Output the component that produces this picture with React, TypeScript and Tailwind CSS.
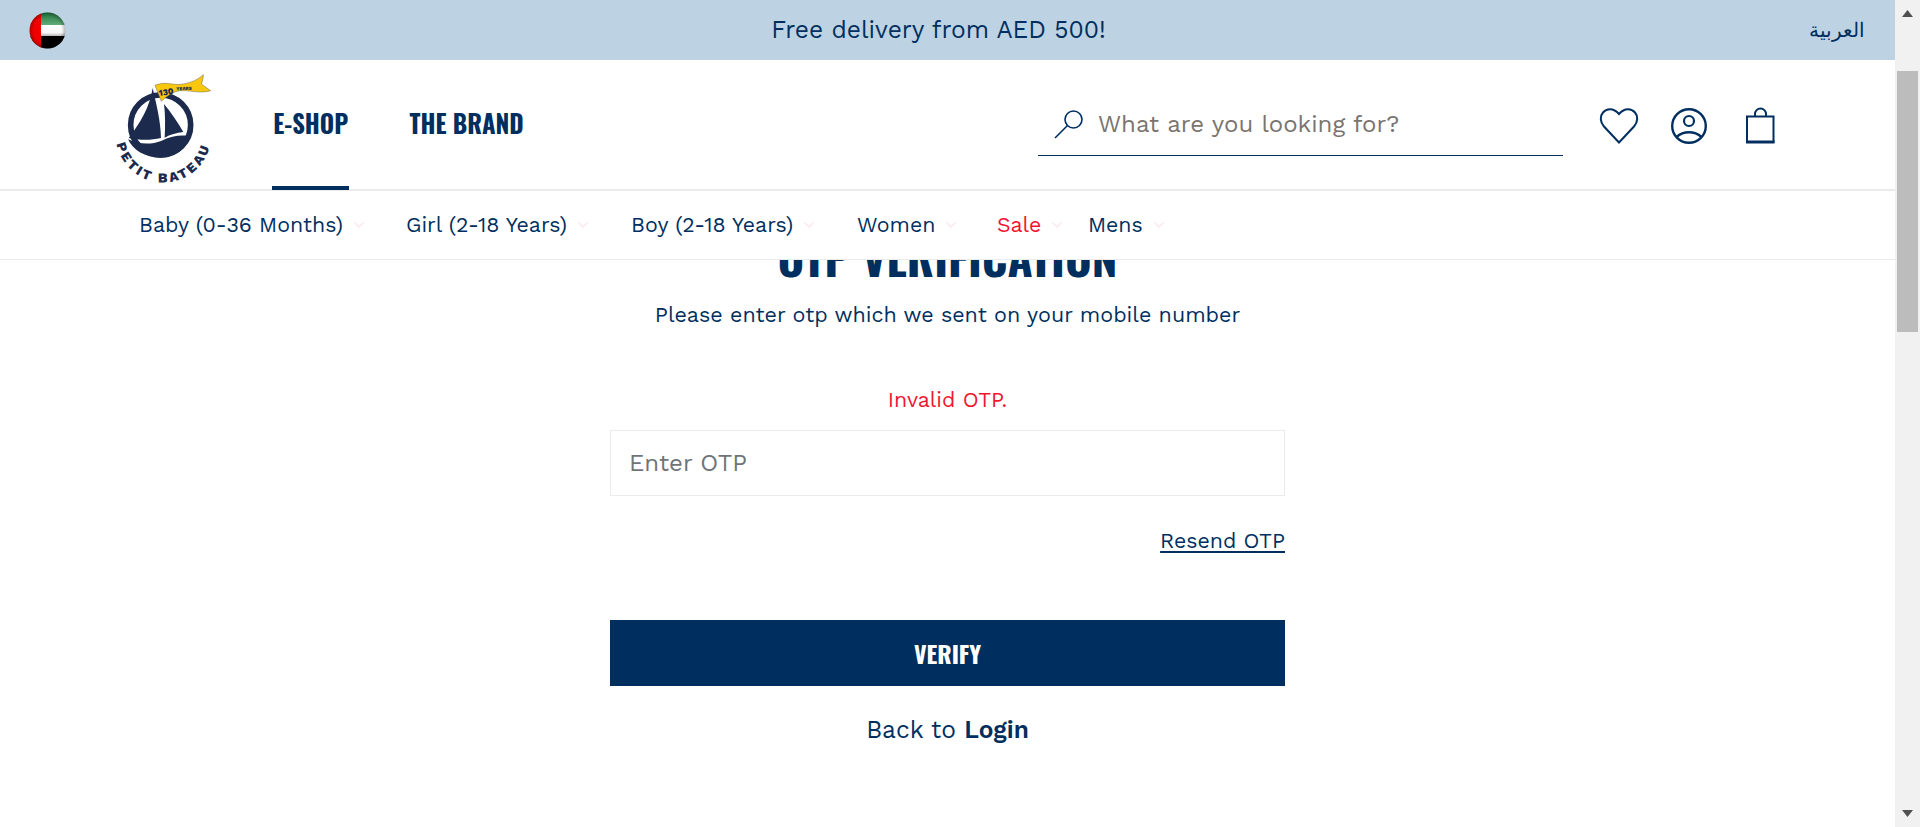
import { ChevronDown } from 'lucide-react'

const NAVY = 'text-[#002f5f]'

const categories = [
  { label: 'Baby (0-36 Months)', className: 'w-[267px]' },
  { label: 'Girl (2-18 Years)', className: 'w-[225px]' },
  { label: 'Boy (2-18 Years)', className: 'w-[226px]' },
  { label: 'Women', className: 'w-[140px]' },
  { label: 'Sale', className: 'w-[91px]', red: true },
  { label: 'Mens', className: 'w-[100px]' },
]

function Flag() {
  return (
    <svg width="37" height="37" viewBox="0 0 37 37">
      <defs>
        <clipPath id="flag-clip">
          <circle cx="18.5" cy="18.5" r="18" />
        </clipPath>
        <linearGradient id="flag-green" x1="0" y1="0" x2="0" y2="1">
          <stop offset="0" stopColor="#1d6f38" />
          <stop offset="1" stopColor="#62ad79" />
        </linearGradient>
        <linearGradient id="flag-white" x1="0" y1="0" x2="0" y2="1">
          <stop offset="0" stopColor="#ffffff" />
          <stop offset="0.7" stopColor="#f6f6f6" />
          <stop offset="1" stopColor="#b5b5b5" />
        </linearGradient>
        <radialGradient id="flag-edge" cx="0.5" cy="0.5" r="0.5">
          <stop offset="0.75" stopColor="#000" stopOpacity="0" />
          <stop offset="1" stopColor="#000" stopOpacity="0.3" />
        </radialGradient>
      </defs>
      <g clipPath="url(#flag-clip)">
        <rect width="37" height="13" fill="url(#flag-green)" />
        <rect y="13" width="37" height="11" fill="url(#flag-white)" />
        <rect y="24" width="37" height="13" fill="#000" />
        <rect width="12" height="37" fill="#f00000" />
        <rect width="37" height="37" fill="url(#flag-edge)" />
      </g>
    </svg>
  )
}

function Logo() {
  return (
    <svg width="140" height="130" viewBox="0 0 420 390" className="shrink-0">
      <circle cx="182" cy="195" r="90" fill="none" stroke="#1c2b4d" strokeWidth="17" />
      <path d="M158 84 C168 130 182 180 183 234 C150 242 115 240 86 234 C120 190 150 140 158 84Z" fill="#1c2b4d" />
      <path d="M192 132 C215 160 235 190 250 216 C230 218 210 224 194 233 C196 200 196 165 192 132Z" fill="#1c2b4d" />
      <path d="M84 238 C115 252 150 256 185 242 C215 228 240 224 268 228 C262 265 225 293 182 293 C135 293 98 270 84 238Z" fill="#1c2b4d" />
      <path d="M165 76 C200 62 215 78 250 72 C275 68 295 58 310 44 C310 58 306 66 304 72 L332 92 C300 102 270 90 240 92 C220 94 200 108 184 124Z" fill="#f9c80e" stroke="#6b6b55" strokeWidth="1.5" />
      <text x="178" y="108" fontFamily="'Work Sans', sans-serif" fontWeight="800" fontSize="26" fill="#1c2b4d" transform="rotate(-9 178 108)">130</text>
      <text x="229" y="91" fontFamily="'Work Sans', sans-serif" fontWeight="800" fontSize="14" fill="#1c2b4d" transform="rotate(-2 229 91)">YEARS</text>
      <path id="logo-curve" d="M50 252 A143 143 0 0 0 332 205" fill="none" />
      <text fontFamily="'Work Sans', sans-serif" fontWeight="800" fontSize="41" letterSpacing="8" fill="#1c2b4d">
        <textPath href="#logo-curve">PETIT BATEAU</textPath>
      </text>
    </svg>
  )
}

function SearchIcon() {
  return (
    <svg width="32" height="30" viewBox="0 0 32 30" fill="none" stroke="#002f5f" strokeWidth="1.6" className="shrink-0">
      <circle cx="20.5" cy="10.5" r="8.5" />
      <path d="M14.5 16.5 L2 29" />
    </svg>
  )
}

function HeartIcon() {
  return (
    <svg width="41" height="37" viewBox="0 0 41 37" fill="none" stroke="#002f5f" strokeWidth="2">
      <path d="M21 35.5 L6 19.5 C2 15 1.8 9 5 5.5 C8.5 1.5 15 0.5 21 7 C27 0.5 33.5 1.5 37 5.5 C40.2 9 40 15 36 19.5Z" />
    </svg>
  )
}

function UserIcon() {
  return (
    <svg width="36" height="37" viewBox="0 0 36 37" fill="none" stroke="#002f5f" strokeWidth="2.4">
      <circle cx="18" cy="19" r="16.8" />
      <circle cx="18" cy="14" r="5" strokeWidth="2.2" />
      <path d="M5.5 30 C10 26 14 25.3 18 25.3 C22 25.3 26 26 30.5 30" />
    </svg>
  )
}

function BagIcon() {
  return (
    <svg width="29" height="37" viewBox="0 0 29 37" fill="none" stroke="#002f5f">
      <rect x="1" y="9.5" width="26.5" height="25.5" strokeWidth="2" />
      <path d="M0 35 H28.5" strokeWidth="3" />
      <path d="M9 9 V7 A5.5 5.5 0 0 1 20 7 V9" strokeWidth="2" />
    </svg>
  )
}

function Scrollbar() {
  return (
    <div className="w-[25px] h-full shrink-0 bg-[#f1f1f1] flex flex-col items-center">
      <svg width="11" height="7" viewBox="0 0 11 7" className="mt-[10px] shrink-0">
        <path d="M5.5 0 L11 7 H0Z" fill="#505050" />
      </svg>
      <div className="mt-[54px] w-[21px] h-[261px] bg-[#bcbcbc]" />
      <svg width="11" height="7" viewBox="0 0 11 7" className="mt-auto mb-[10px] shrink-0">
        <path d="M0 0 H11 L5.5 7Z" fill="#505050" />
      </svg>
    </div>
  )
}

export default function App() {
  return (
    <div className={`h-[827px] flex overflow-hidden bg-white ${NAVY} font-['Work_Sans','Inter',sans-serif]`}>
      <div className="flex-1 min-w-0 h-full overflow-hidden">
        <header className="relative z-10 bg-white">
          <div className="h-[60px] bg-[#bdd3e3] grid grid-cols-[1fr_auto_1fr] items-center pl-[29px] pr-[30px]">
            <Flag />
            <p className="text-[24.5px] pr-[17px]">Free delivery from AED 500!</p>
            <a className="justify-self-end text-[20px] font-['Liberation_Serif',serif]">العربية</a>
          </div>

          <div className="h-[131px] border-b-2 border-[#ebebeb] flex pl-[100px]">
            <Logo />
            <nav className="ml-[32px] w-[766px] shrink-0 flex gap-[60px] font-['Oswald','Liberation_Sans',sans-serif] font-bold text-[24.6px]">
              <a className="h-[130px] flex items-center px-[1.2px] border-b-[4px] border-[#002f5f]">E-SHOP</a>
              <a className="h-[130px] flex items-center border-b-[4px] border-transparent">THE BRAND</a>
            </nav>
            <div className="mt-[29px] w-[525px] shrink-0 h-[67px] border-b-[1.5px] border-[#002f5f] flex items-center pl-[15px] pt-[3px] gap-[13px]">
              <SearchIcon />
              <span className="text-[24px] text-[#7a7470]">What are you looking for?</span>
            </div>
            <div className="ml-[35px] mt-[47px] h-[38px] flex">
              <HeartIcon />
              <div className="ml-[32px]"><UserIcon /></div>
              <div className="ml-[39px]"><BagIcon /></div>
            </div>
          </div>

          <nav className="h-[69px] border-b border-[#ebebeb] flex items-center pl-[139px] text-[21.33px]">
            {categories.map((c) => (
              <a key={c.label} className={`${c.className} flex items-center gap-[8px] ${c.red ? 'text-[#f5132f]' : ''}`}>
                {c.label}
                <ChevronDown size={16} strokeWidth={2.5} className="text-[#fde8ea]" />
              </a>
            ))}
          </nav>
        </header>

        <main className="w-[675px] mx-auto text-center">
          <h1 className="-mt-[19px] text-[45.8px] leading-[30px] font-bold font-['Oswald','Liberation_Sans',sans-serif]">
            OTP VERIFICATION
          </h1>
          <p className="mt-[30px] text-[21.47px] leading-[28px]">Please enter otp which we sent on your mobile number</p>
          <p className="mt-[57px] text-[21.33px] leading-[28px] text-[#f0162f]">Invalid OTP.</p>
          <input
            placeholder="Enter OTP"
            className="mt-[16px] block w-full h-[66px] border border-[#ebebeb] px-[18px] text-[24px] outline-none placeholder:text-[#6f7478]"
          />
          <div className="mt-[31px] text-right">
            <a className="text-[21.33px] leading-[28px] underline underline-offset-[3px]">Resend OTP</a>
          </div>
          <button className="mt-[65px] block w-full h-[66px] bg-[#002f5f] text-white text-[24px] font-bold font-['Oswald','Liberation_Sans',sans-serif]">
            VERIFY
          </button>
          <p className="mt-[30px] text-[24.5px] leading-[28px]">
            Back to <b className="font-semibold">Login</b>
          </p>
        </main>
      </div>
      <Scrollbar />
    </div>
  )
}
